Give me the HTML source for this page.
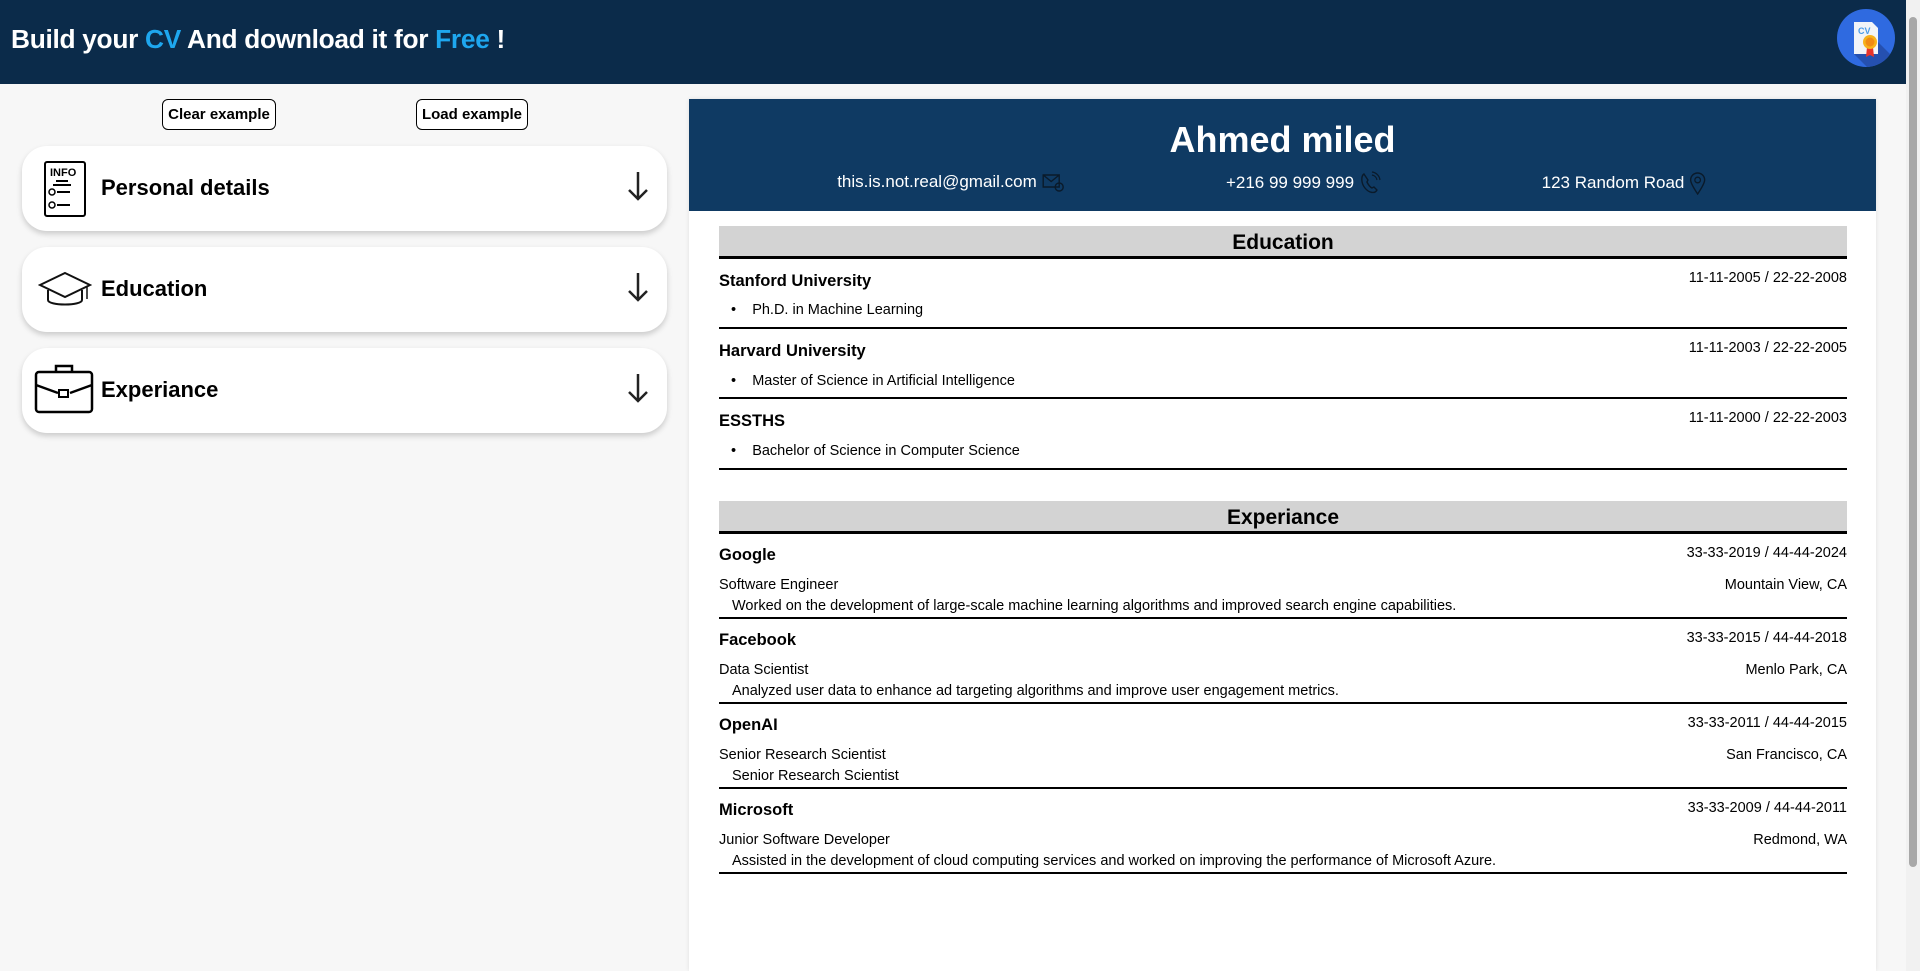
<!DOCTYPE html>
<html><head><meta charset="utf-8"><style>
*{margin:0;padding:0;box-sizing:border-box}
body{width:1920px;height:971px;overflow:hidden;background:#f7f7f7;font-family:"Liberation Sans",sans-serif;position:relative}
.top{position:absolute;left:0;top:0;width:1906px;height:84px;background:#0b2b4a}
.top h1{position:absolute;left:11px;top:24px;color:#fff;font-size:26.3px;font-weight:bold;letter-spacing:-0.3px}
.top h1 span{color:#1ea7ef}
.logo{position:absolute;left:1837px;top:9px;width:58px;height:58px;border-radius:50%;background:#2f6ae0;overflow:hidden}
.sb{position:absolute;left:1906px;top:0;width:14px;height:971px;background:#f1f1f1}
.sb div{position:absolute;left:3px;top:17px;width:8px;height:850px;background:#a8a8a8;border-radius:4px}
.btn{position:absolute;top:99px;height:31px;border:1.5px solid #000;border-radius:6px;background:#fff;font-size:15px;font-weight:bold;display:flex;align-items:center;justify-content:center}
.card{position:absolute;left:22px;width:645px;height:85px;background:#fff;border-radius:25px;box-shadow:0 3px 6px rgba(0,0,0,.18)}
.card .t{position:absolute;left:79px;top:29px;font-size:22px;font-weight:bold}
.card svg.ar{position:absolute;left:604px;top:24px}
.card svg.ic{position:absolute}
.cv{position:absolute;left:689px;top:99px;width:1187px;height:872px;background:#fff;box-shadow:0 0 4px rgba(0,0,0,.1)}
.cvh{position:absolute;left:0;top:0;width:1187px;height:112px;background:#0f3a63;color:#fff}
.cvh h2{position:absolute;width:100%;text-align:center;top:20px;font-size:36px}
.ct{position:absolute;top:72px;font-size:17px;transform:translateX(-50%);white-space:nowrap;display:flex;align-items:center;gap:4px}
.sec{position:absolute;left:30px;width:1128px}
.bar{height:33px;background:#d3d3d3;border-bottom:3px solid #000;text-align:center;font-size:21px;font-weight:bold;line-height:33px}
.e{position:relative;border-bottom:2px solid #000}
.e .n{position:absolute;left:0;font-size:16.5px;font-weight:bold}
.e .d{position:absolute;right:0;font-size:14.5px}
.e .s{position:absolute;font-size:14.5px}
</style></head><body>
<div class="top"><h1>Build your <span>CV</span> And download it for <span>Free</span> !</h1>
<div class="logo"><svg width="58" height="58"><path d="M24 16 L58 50 L58 58 L30 58 L17 45Z" fill="#2550b0"/><path d="M17 13h18l6 6v26H17z" fill="#f2f4f8"/><text x="21" y="25" font-size="9" font-weight="bold" fill="#4a9be8" font-family="Liberation Sans">CV</text><path d="M30 38l-1 10 4-2 4 2-1-10z" fill="#e8332a"/><circle cx="33" cy="33" r="7" fill="#f7b21b"/><circle cx="33" cy="33" r="4.5" fill="#f08a14"/></svg></div></div>
<div class="sb"><div></div></div>
<div class="btn" style="left:162px;width:114px">Clear example</div>
<div class="btn" style="left:416px;width:112px">Load example</div>

<div class="card" style="top:146px"><svg class="ic" style="left:21px;top:14px" width="44" height="58"><rect x="2" y="2" width="40" height="54" rx="2" fill="none" stroke="#000" stroke-width="2"/><text x="7" y="16" font-size="11" font-weight="bold" font-family="Liberation Sans">INFO</text><path d="M13 21h12M10 25h18M14 32h13M14 45h13" stroke="#000" stroke-width="2"/><circle cx="9" cy="32" r="3" fill="none" stroke="#000" stroke-width="1.5"/><circle cx="9" cy="45" r="3" fill="none" stroke="#000" stroke-width="1.5"/></svg><div class="t">Personal details</div><svg class="ar" width="24" height="32"><path d="M12 2v27M3 20l9 9 9-9" fill="none" stroke="#222" stroke-width="2.5"/></svg></div>
<div class="card" style="top:247px"><svg class="ic" style="left:16px;top:24px" width="54" height="40"><path d="M27 2L52 14 27 26 2 14Z" fill="none" stroke="#111" stroke-width="2"/><path d="M10 19v10c0 6 34 6 34 0V19" fill="none" stroke="#111" stroke-width="2"/><path d="M49 16v12" stroke="#111" stroke-width="1.5"/></svg><div class="t">Education</div><svg class="ar" width="24" height="32"><path d="M12 2v27M3 20l9 9 9-9" fill="none" stroke="#222" stroke-width="2.5"/></svg></div>
<div class="card" style="top:348px"><svg class="ic" style="left:12px;top:15px" width="60" height="52"><path d="M22 9V3h16v6" fill="none" stroke="#000" stroke-width="2.5"/><rect x="2" y="9" width="56" height="40" rx="3" fill="none" stroke="#000" stroke-width="2.5"/><path d="M2 22l22 8M58 22l-22 8" stroke="#000" stroke-width="2.5"/><rect x="25" y="27" width="9" height="7" fill="none" stroke="#000" stroke-width="2"/></svg><div class="t">Experiance</div><svg class="ar" width="24" height="32"><path d="M12 2v27M3 20l9 9 9-9" fill="none" stroke="#222" stroke-width="2.5"/></svg></div>

<div class="cv">
<div class="cvh"><h2>Ahmed miled</h2>
<div class="ct" style="left:262px">this.is.not.real@gmail.com <svg width="24" height="22"><path d="M2 4h16v12H2zM2 4l8 6.5L18 4" fill="none" stroke="#0a1a2a" stroke-width="1.4"/><circle cx="18" cy="16" r="4" fill="none" stroke="#0a1a2a" stroke-width="1.4"/></svg></div>
<div class="ct" style="left:615px">+216 99 999 999 <svg width="24" height="24"><path d="M6 3c-3 2-3 9 1 14s10 6 12 2l-3-3-2 1c-2-1-4-4-5-6l1-2z" fill="none" stroke="#0a1a2a" stroke-width="1.4"/><path d="M14 4a6 6 0 015 5M14 1a9 9 0 018 8" fill="none" stroke="#0a1a2a" stroke-width="1.2"/></svg></div>
<div class="ct" style="left:935px">123 Random Road <svg width="18" height="24"><path d="M9 23C3 14 2 11 2 9a7 7 0 0114 0c0 2-1 5-7 14z" fill="none" stroke="#0a1a2a" stroke-width="1.4"/><circle cx="9" cy="9" r="2.8" fill="none" stroke="#0a1a2a" stroke-width="1.3"/></svg></div>
</div>

<div class="sec" style="top:127px"><div class="bar">Education</div>
<div class="e" style="height:70px"><div class="n" style="top:13px">Stanford University</div><div class="d" style="top:11px">11-11-2005 / 22-22-2008</div><div class="s" style="left:12px;top:43px">•&nbsp;&nbsp;&nbsp;&nbsp;Ph.D. in Machine Learning</div></div>
<div class="e" style="height:70px"><div class="n" style="top:13px">Harvard University</div><div class="d" style="top:11px">11-11-2003 / 22-22-2005</div><div class="s" style="left:12px;top:44px">•&nbsp;&nbsp;&nbsp;&nbsp;Master of Science in Artificial Intelligence</div></div>
<div class="e" style="height:71px"><div class="n" style="top:13px">ESSTHS</div><div class="d" style="top:11px">11-11-2000 / 22-22-2003</div><div class="s" style="left:12px;top:44px">•&nbsp;&nbsp;&nbsp;&nbsp;Bachelor of Science in Computer Science</div></div>
</div>

<div class="sec" style="top:402px"><div class="bar">Experiance</div>
<div class="e" style="height:85px"><div class="n" style="top:12px">Google</div><div class="d" style="top:11px">33-33-2019 / 44-44-2024</div><div class="s" style="left:0;top:43px">Software Engineer</div><div class="d" style="top:43px">Mountain View, CA</div><div class="s" style="left:13px;top:64px">Worked on the development of large-scale machine learning algorithms and improved search engine capabilities.</div></div>
<div class="e" style="height:85px"><div class="n" style="top:12px">Facebook</div><div class="d" style="top:11px">33-33-2015 / 44-44-2018</div><div class="s" style="left:0;top:43px">Data Scientist</div><div class="d" style="top:43px">Menlo Park, CA</div><div class="s" style="left:13px;top:64px">Analyzed user data to enhance ad targeting algorithms and improve user engagement metrics.</div></div>
<div class="e" style="height:85px"><div class="n" style="top:12px">OpenAI</div><div class="d" style="top:11px">33-33-2011 / 44-44-2015</div><div class="s" style="left:0;top:43px">Senior Research Scientist</div><div class="d" style="top:43px">San Francisco, CA</div><div class="s" style="left:13px;top:64px">Senior Research Scientist</div></div>
<div class="e" style="height:85px"><div class="n" style="top:12px">Microsoft</div><div class="d" style="top:11px">33-33-2009 / 44-44-2011</div><div class="s" style="left:0;top:43px">Junior Software Developer</div><div class="d" style="top:43px">Redmond, WA</div><div class="s" style="left:13px;top:64px">Assisted in the development of cloud computing services and worked on improving the performance of Microsoft Azure.</div></div>
</div>
</div>
</body></html>
